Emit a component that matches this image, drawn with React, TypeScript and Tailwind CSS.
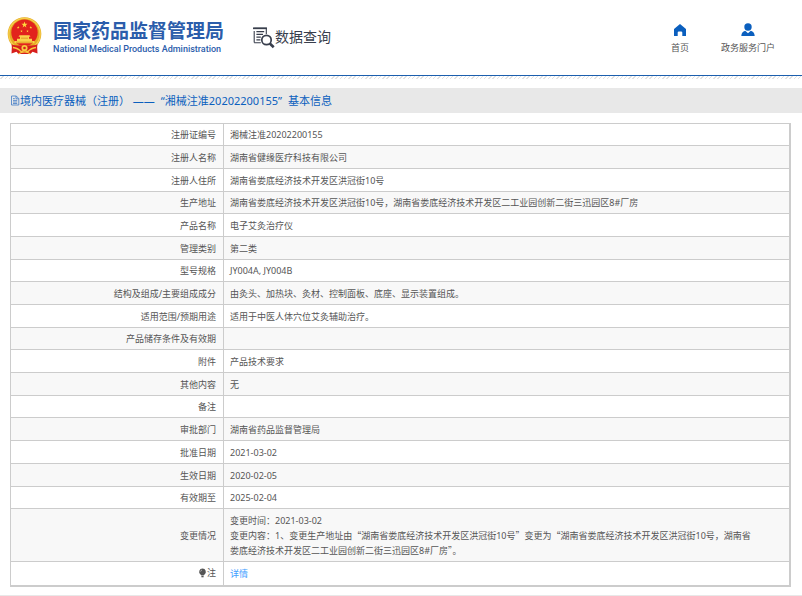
import type { ReactNode } from "react";

type Row = { label: ReactNode; value: ReactNode; height: string };

const rows: Row[] = [
  { label: "注册证编号", value: "湘械注准20202200155", height: "h-[22px]" },
  { label: "注册人名称", value: "湖南省健缘医疗科技有限公司", height: "h-[23px]" },
  { label: "注册人住所", value: "湖南省娄底经济技术开发区洪冠街10号", height: "h-[23px]" },
  {
    label: "生产地址",
    value: "湖南省娄底经济技术开发区洪冠街10号，湖南省娄底经济技术开发区二工业园创新二街三迅园区8#厂房",
    height: "h-[22px]",
  },
  { label: "产品名称", value: "电子艾灸治疗仪", height: "h-[23px]" },
  { label: "管理类别", value: "第二类", height: "h-[23px]" },
  { label: "型号规格", value: "JY004A, JY004B", height: "h-[22px]" },
  {
    label: "结构及组成/主要组成成分",
    value: "由灸头、加热块、灸材、控制面板、底座、显示装置组成。",
    height: "h-[23px]",
  },
  { label: "适用范围/预期用途", value: "适用于中医人体穴位艾灸辅助治疗。", height: "h-[23px]" },
  { label: "产品储存条件及有效期", value: "", height: "h-[22px]" },
  { label: "附件", value: "产品技术要求", height: "h-[23px]" },
  { label: "其他内容", value: "无", height: "h-[23px]" },
  { label: "备注", value: "", height: "h-[22px]" },
  { label: "审批部门", value: "湖南省药品监督管理局", height: "h-[23px]" },
  { label: "批准日期", value: "2021-03-02", height: "h-[23px]" },
  { label: "生效日期", value: "2020-02-05", height: "h-[23px]" },
  { label: "有效期至", value: "2025-02-04", height: "h-[22px]" },
  {
    label: "变更情况",
    value: (
      <>
        变更时间：2021-03-02
        <br />
        变更内容：1、变更生产地址由<Quoted>湖南省娄底经济技术开发区洪冠街10号</Quoted>变更为<Wide>“</Wide>
        湖南省娄底经济技术开发区洪冠街10号，湖南省
        <br />
        娄底经济技术开发区二工业园创新二街三迅园区8#厂房<Wide>”</Wide>。
      </>
    ),
    height: "h-[53px]",
  },
  {
    label: (
      <span className="inline-flex items-center">
        <BulbIcon />注
      </span>
    ),
    value: (
      <a href="#detail" className="text-[#409eff]">
        详情
      </a>
    ),
    height: "h-[24px]",
  },
];

/* Full-width form of a punctuation mark */
function Wide({ children }: { children: ReactNode }) {
  return <span className="font-['Noto_Sans_CJK_SC',sans-serif]">{children}</span>;
}

function Quoted({ children }: { children: ReactNode }) {
  return (
    <>
      <Wide>“</Wide>
      {children}
      <Wide>”</Wide>
    </>
  );
}

function BulbIcon() {
  return (
    <svg width="9" height="10" viewBox="0 0 9 10" aria-hidden="true">
      <path d="M4.5 0.5a3.4 3.4 0 0 1 2 6.1L5.6 7.6H3.4L2.5 6.600a3.4 3.4 0 0 1 2-6.100z" fill="#555" />
      <path d="M3.4 8h2.200v1.300H3.400z" fill="#555" />
      <path d="M2.6 3.6c.1-.9.6-1.4 1.4-1.600" stroke="#ddd" strokeWidth="0.6" fill="none" />
    </svg>
  );
}

function Emblem() {
  const star = "M0-1l.24.68h.71l-.57.44.21.7L0 .41l-.59.41.21-.7-.57-.44h.71z";
  return (
    <svg width="35" height="38" viewBox="0 0 34 38" aria-hidden="true">
      <path d="M4.5 27L4 36.5l5-1.7 2 2.2h12l2-2.2 5 1.7-.5-9.5z" fill="#d71f1d" />
      <circle cx="17" cy="17" r="16.8" fill="#e5a923" />
      <circle cx="17" cy="17" r="15.6" fill="none" stroke="#f5cf4d" strokeWidth="1.4" />
      <circle cx="17" cy="15.6" r="13.2" fill="#e2231d" />
      <path d={star} transform="translate(17 7.8) scale(3.2)" fill="#ffd83d" />
      <path d={star} transform="translate(10.7 10.5) scale(1.4)" fill="#ffd83d" />
      <path d={star} transform="translate(23.3 10.5) scale(1.4)" fill="#ffd83d" />
      <path d={star} transform="translate(14 14.2) scale(1.3)" fill="#ffd83d" />
      <path d={star} transform="translate(20 14.2) scale(1.3)" fill="#ffd83d" />
      <path d="M12 18.200h10l1 1.600h-1.500v2h3v2.200H27v2.200H7V24h2.500v-2.200h3v-2H11z" fill="#fbd34b" />
      <path d="M13.5 20.8h7v.8h-7zM8.5 24.8h17v.6h-17z" fill="#d78a1c" />
      <path d="M4 27.3c5 1.8 8 1.2 13 1.2s8 .6 13-1.2l-.6 3.4-5.4 1.6-3 3.7-4-2.3-4 2.3-3-3.7-5.4-1.600z" fill="#d71f1d" />
      <circle cx="17" cy="31" r="3.1" fill="#f7c93f" />
      <circle cx="17" cy="31" r="1.3" fill="#d71f1d" />
      <path d="M5.5 30.5c4 .3 5.8 1.5 8.2 4.2l3.3-1.2 3.3 1.2c2.4-2.7 4.2-3.9 8.2-4.2" fill="none" stroke="#f7c93f" strokeWidth="1.4" />
      <path d="M11 37c2-1.5 4-2 6-2s4 .5 6 2" fill="none" stroke="#f7c93f" strokeWidth="1.2" />
    </svg>
  );
}

function SearchDocIcon() {
  return (
    <svg width="22" height="22" viewBox="0 0 22 22" fill="none" stroke="#383e4c" aria-hidden="true">
      <path d="M13.3 7V1.5M1.2 1.2h12.4M1.2 15.5V4M1.2 15.8h6.6" strokeWidth="1.1" />
      <path d="M0 1.3h14" strokeWidth="1.7" />
      <path d="M3.4 4.6h7.8M3.4 7.4h6.6M3.4 10.1h4.4M3.4 12.9h4" strokeWidth="1.1" />
      <circle cx="13.5" cy="13" r="4.7" strokeWidth="1.7" />
      <path d="M16.8 16.5l3.9 3.8" strokeWidth="2.6" />
    </svg>
  );
}

function DocIcon() {
  return (
    <svg width="10" height="11" viewBox="0 0 10 11" fill="none" stroke="#3d78c4" strokeWidth="0.8" aria-hidden="true">
      <path d="M1.5 1h4.8L8.8 3.6V10H1.5z" />
      <path d="M6 1v2.8h2.8M3 5.4h4.2M3 7h4.2M3 8.5h4.2M3 3.6h1.8" />
    </svg>
  );
}

function HomeIcon() {
  return (
    <svg width="14" height="14" viewBox="0 0 14 14" fill="#0b5fbe" aria-hidden="true">
      <path d="M7 1l6 5v7H9.3V9.6a1.2 1.2 0 0 0-1.2-1.2H5.9a1.2 1.2 0 0 0-1.2 1.2V13H1V6z" />
    </svg>
  );
}

function UserIcon() {
  return (
    <svg width="14" height="14" viewBox="0 0 14 14" fill="#0b5fbe" aria-hidden="true">
      <circle cx="7" cy="4" r="3.7" />
      <path d="M4.2 7.7L7 10.2l2.8-2.5c2.4.8 3.7 2.4 3.9 5.3H.3c.2-2.9 1.5-4.5 3.9-5.3z" />
    </svg>
  );
}

export default function App() {
  return (
    <div className="border-b border-[#e8e8e8] bg-white pb-2 font-['Noto_Sans','Noto_Sans_CJK_SC',sans-serif] text-[9px] leading-[15px] text-[#555]">
      <header className="flex h-[75px] items-start pr-[27px] pl-[7px]">
        <a href="#home" className="flex pt-[17px]">
          <Emblem />
          <span className="ml-[11px] flex w-[171px] flex-col pt-[3px] text-[#2b5dab]">
            <span className="text-[19px] leading-[22px] font-bold whitespace-nowrap">国家药品监督管理局</span>
            <span className="font-['Roboto',sans-serif] text-[9px] leading-[15px] font-medium whitespace-nowrap">
              National Medical Products Administration
            </span>
          </span>
        </a>
        <h1 className="ml-[29px] flex pt-[27px] text-[14px] leading-[19px] text-[#383e4c]">
          <SearchDocIcon />
          <span className="whitespace-nowrap">数据查询</span>
        </h1>
        <nav className="ml-auto flex gap-8 pt-[23px]">
          <a href="#index" className="flex flex-col items-center gap-[3px]">
            <HomeIcon />
            首页
          </a>
          <a href="#portal" className="flex flex-col items-center gap-[3px]">
            <UserIcon />
            政务服务门户
          </a>
        </nav>
      </header>
      <div className="h-1 border-t border-[#1c5fae] bg-[repeating-linear-gradient(135deg,#fff_0px,#fff_2px,#e2e2e2_2px,#e2e2e2_3px)]" />

      <h2 className="mt-[9px] flex h-[25px] items-center bg-[#e8e8e8] pl-[10px] text-[11px] text-[#0b5fbe]">
        <DocIcon />
        <span className="flex gap-[6px]">
          <span>境内医疗器械（注册） ——</span>
          <span>“湘械注准20202200155”</span>
          <span>基本信息</span>
        </span>
      </h2>

      <main className="mt-[10px] mr-[11px] ml-[10px] border-r border-b border-[#ccc]">
        <table className="w-full table-fixed border-collapse">
          <colgroup>
            <col className="w-[213px]" />
            <col />
          </colgroup>
          <tbody>
            {rows.map((row, i) => (
              <tr key={i} className={`${row.height} ${i % 2 ? "bg-[#f8f8f8]" : "bg-white"}`}>
                <th scope="row" className="border border-[#ccc] px-[7px] py-0 text-right font-normal">
                  {row.label}
                </th>
                <td className="border border-[#ccc] px-[6px] py-0">{row.value}</td>
              </tr>
            ))}
          </tbody>
        </table>
      </main>
    </div>
  );
}
